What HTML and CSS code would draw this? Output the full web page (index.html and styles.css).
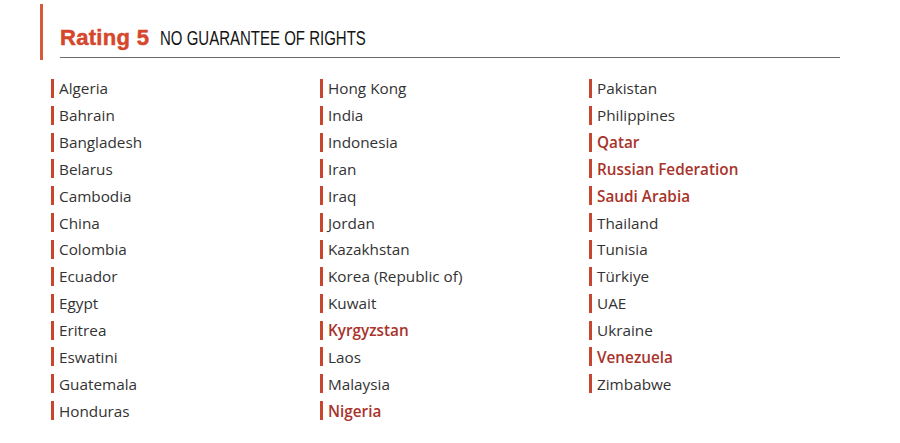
FILE: index.html
```html
<!DOCTYPE html>
<html>
<head>
<meta charset="utf-8">
<link rel="stylesheet" href="styles.css">
</head>
<body>
<div class="page">
  <div class="header">
    <div class="header-inner">
      <span class="rating">Rating 5</span>
      <span class="subtitle">NO GUARANTEE OF RIGHTS</span>
    </div>
  </div>
  <div class="columns">
    <ul class="col">
      <li>Algeria</li>
      <li>Bahrain</li>
      <li>Bangladesh</li>
      <li>Belarus</li>
      <li>Cambodia</li>
      <li>China</li>
      <li>Colombia</li>
      <li>Ecuador</li>
      <li>Egypt</li>
      <li>Eritrea</li>
      <li>Eswatini</li>
      <li>Guatemala</li>
      <li>Honduras</li>
    </ul>
    <ul class="col">
      <li>Hong Kong</li>
      <li>India</li>
      <li>Indonesia</li>
      <li>Iran</li>
      <li>Iraq</li>
      <li>Jordan</li>
      <li>Kazakhstan</li>
      <li>Korea (Republic of)</li>
      <li>Kuwait</li>
      <li class="hl">Kyrgyzstan</li>
      <li>Laos</li>
      <li>Malaysia</li>
      <li class="hl">Nigeria</li>
    </ul>
    <ul class="col">
      <li>Pakistan</li>
      <li>Philippines</li>
      <li class="hl">Qatar</li>
      <li class="hl">Russian Federation</li>
      <li class="hl">Saudi Arabia</li>
      <li>Thailand</li>
      <li>Tunisia</li>
      <li>Türkiye</li>
      <li>UAE</li>
      <li>Ukraine</li>
      <li class="hl">Venezuela</li>
      <li>Zimbabwe</li>
    </ul>
  </div>
</div>
</body>
</html>
```
FILE: styles.css
```css
html, body {
  margin: 0;
  padding: 0;
  background: #ffffff;
}
.page {
  width: 900px;
  height: 443px;
  box-sizing: border-box;
  padding: 4px 0 0 40px;
}
.header {
  border-left: 3px solid #d9593d;
  height: 56px;
  padding-left: 17px;
  box-sizing: border-box;
}
.header-inner {
  width: 780px;
  height: 54px;
  border-bottom: 1px solid #6b6b6b;
  box-sizing: border-box;
  display: flex;
  align-items: baseline;
  padding-top: 24px;
  line-height: 20px;
}
.rating {
  font-family: "Liberation Sans", Arial, sans-serif;
  font-weight: bold;
  font-size: 22px;
  letter-spacing: 0.3px;
  color: #d5472c;
  -webkit-text-stroke: 0.5px #d5472c;
  margin-right: 11px;
}
.subtitle {
  display: inline-block;
  font-family: "Liberation Sans", Arial, sans-serif;
  font-size: 20px;
  color: #141414;
  transform: scaleX(0.75);
  transform-origin: left center;
  white-space: nowrap;
}
.columns {
  display: flex;
  padding-left: 11px;
  margin-top: 15px;
}
.col {
  list-style: none;
  margin: 0;
  padding: 0;
  width: 269px;
}
.col li {
  font-family: "Open Sans", "Lato", sans-serif;
  font-size: 15.3px;
  color: #333333;
  height: 26.85px;
  display: flex;
  align-items: center;
  line-height: 18px;
}
.col li::before {
  content: "";
  display: block;
  width: 3px;
  height: 19px;
  background: #c9462e;
  margin-right: 5px;
}
.col li.hl {
  color: #a8342b;
  font-weight: 600;
}
```
